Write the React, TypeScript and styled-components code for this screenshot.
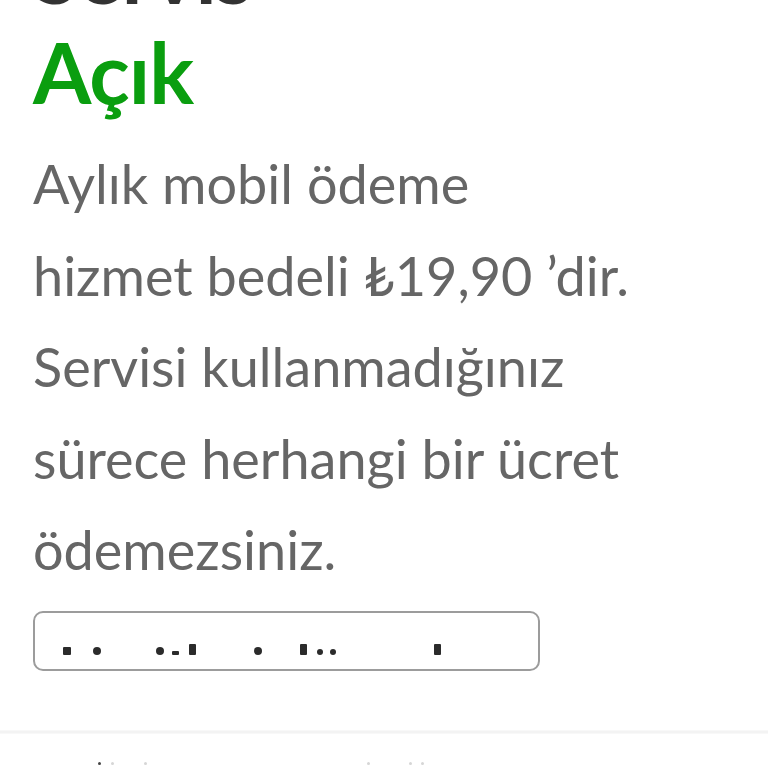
import * as React from 'react';
import styled, { createGlobalStyle } from 'styled-components';

const GlobalStyle = createGlobalStyle`
    html, body {
        margin: 0;
        padding: 0;
        background: #ffffff;
        overflow: hidden;
    }
`;

const Page = styled.div`
    width: 768px;
    height: 768px;
    overflow: hidden;
    display: flex;
    flex-direction: column;
    font-family: Lato, "Open Sans", "DejaVu Sans", sans-serif;
`;

const Content = styled.div`
    display: flex;
    flex-direction: column;
    padding: 0 32px 0 33px;
`;

const Heading = styled.h1`
    margin: -68px 0 0;
    font-size: 84px;
    line-height: 80px;
    font-weight: 700;
    color: #333333;
    letter-spacing: -1px;
`;

const Status = styled.div`
    margin-top: 20px;
    font-size: 84px;
    line-height: 80px;
    font-weight: 700;
    color: #0a9e0f;
    letter-spacing: -1px;
`;

const Description = styled.p`
    margin: 26px 0 0;
    font-size: 54px;
    line-height: 91.5px;
    font-weight: 400;
    color: #666666;
`;

const Field = styled.div`
    margin-top: 15px;
    width: 507px;
    height: 60px;
    box-sizing: border-box;
    border: 2px solid #9c9c9c;
    border-radius: 10px;
    display: flex;
    align-items: flex-end;
    padding: 0 0 14px 0;
`;

interface IMark {
    $x: number;
    $w: number;
    $h: number;
    $round?: boolean;
}

const Mark = styled.span<IMark>`
    position: absolute;
    left: ${p => p.$x}px;
    bottom: 0;
    width: ${p => p.$w}px;
    height: ${p => p.$h}px;
    background: #2b2b2b;
    border-radius: ${p => (p.$round ? '50%' : '1px')};
`;

const MarkRow = styled.div`
    position: relative;
    width: 100%;
    height: 12px;
`;

const Divider = styled.div`
    margin-top: 59px;
    height: 3px;
    background: #f3f3f3;
    border-top: 1px solid #f8f8f8;
    border-bottom: 1px solid #f8f8f8;
`;

const FooterRow = styled.div`
    position: relative;
    height: 40px;
`;

const FooterDot = styled.span<{ $x: number; $dark?: boolean }>`
    position: absolute;
    left: ${p => p.$x}px;
    top: 28px;
    width: 3px;
    height: 3px;
    border-radius: 50%;
    background: ${p => (p.$dark ? '#444' : '#d6d6d6')};
`;

// glyph fragments showing in the masked field (x relative to field content box)
const marks: IMark[] = [
    { $x: 28, $w: 8, $h: 8 },
    { $x: 58, $w: 8, $h: 8, $round: true },
    { $x: 121, $w: 8, $h: 8, $round: true },
    { $x: 137, $w: 7, $h: 4 },
    { $x: 154, $w: 7, $h: 11 },
    { $x: 219, $w: 8, $h: 8, $round: true },
    { $x: 265, $w: 7, $h: 11 },
    { $x: 282, $w: 6, $h: 6, $round: true },
    { $x: 295, $w: 6, $h: 6, $round: true },
    { $x: 399, $w: 7, $h: 11 },
];

const footerDots = [
    { x: 98, dark: true },
    { x: 111 },
    { x: 144 },
    { x: 367 },
    { x: 409 },
    { x: 421 },
];

const App: React.FunctionComponent = () => (
    <Page>
        <GlobalStyle />
        <Content>
            <Heading>Servis</Heading>
            <Status>Açık</Status>
            <Description>
                Aylık mobil ödeme
                <br />
                hizmet bedeli ₺19,90 ’dir.
                <br />
                Servisi kullanmadığınız
                <br />
                sürece herhangi bir ücret
                <br />
                ödemezsiniz.
            </Description>
            <Field>
                <MarkRow>
                    {marks.map((m, i) => (
                        <Mark key={i} {...m} />
                    ))}
                </MarkRow>
            </Field>
        </Content>
        <Divider />
        <FooterRow>
            {footerDots.map((d, i) => (
                <FooterDot key={i} $x={d.x} $dark={d.dark} />
            ))}
        </FooterRow>
    </Page>
);

export default App;
